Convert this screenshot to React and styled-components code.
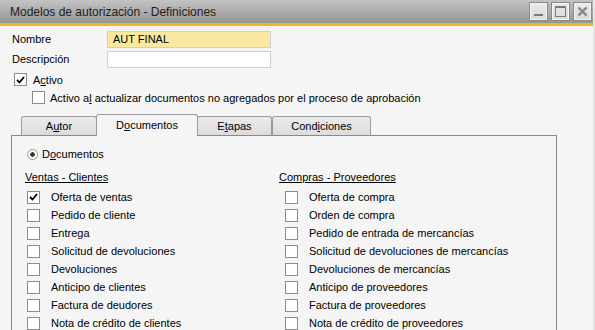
import styled, { createGlobalStyle } from 'styled-components';

const GlobalStyle = createGlobalStyle`
  html, body {
    margin: 0;
    padding: 0;
    background: #f5f5f5;
  }
  * {
    box-sizing: border-box;
  }
`;

const ventas = [
  { label: 'Oferta de ventas', checked: true },
  { label: 'Pedido de cliente' },
  { label: 'Entrega' },
  { label: 'Solicitud de devoluciones' },
  { label: 'Devoluciones' },
  { label: 'Anticipo de clientes' },
  { label: 'Factura de deudores' },
  { label: 'Nota de crédito de clientes' },
];

const compras = [
  { label: 'Oferta de compra' },
  { label: 'Orden de compra' },
  { label: 'Pedido de entrada de mercancías' },
  { label: 'Solicitud de devoluciones de mercancías' },
  { label: 'Devoluciones de mercancías' },
  { label: 'Anticipo de proveedores' },
  { label: 'Factura de proveedores' },
  { label: 'Nota de crédito de proveedores' },
];

const tabs = [
  { key: 'autor', pre: 'A', hot: 'u', post: 'tor', width: 76 },
  { key: 'docs', pre: 'D', hot: 'o', post: 'cumentos', width: 102, active: true },
  { key: 'etapas', pre: 'E', hot: 't', post: 'apas', width: 75 },
  { key: 'cond', pre: 'Cond', hot: 'i', post: 'ciones', width: 99 },
];

const CheckMark = () => (
  <svg width="9" height="8" viewBox="0 0 9 8">
    <polyline points="1,4 3.5,6.5 8,1" fill="none" stroke="#000" strokeWidth="1.8" />
  </svg>
);

const CheckBox = ({ checked }) => <Box>{checked && <CheckMark />}</Box>;

const App = () => {
  return (
    <Window>
      <GlobalStyle />
      <TitleBar>
        <Title>Modelos de autorización - Definiciones</Title>
        <WinButtons>
          <WinButton>
            <svg width="11" height="11" viewBox="0 0 11 11">
              <rect x="1" y="8" width="9" height="2" fill="#7a7a7a" />
            </svg>
          </WinButton>
          <WinButton>
            <svg width="13" height="13" viewBox="0 0 13 13">
              <rect x="1.5" y="1.5" width="10" height="10" fill="none" stroke="#7a7a7a" />
              <rect x="1" y="1" width="11" height="2" fill="#7a7a7a" />
            </svg>
          </WinButton>
          <WinButton>
            <svg width="11" height="11" viewBox="0 0 11 11">
              <path d="M1.5 1.5 L9.5 9.5 M9.5 1.5 L1.5 9.5" stroke="#858585" strokeWidth="2.4" />
            </svg>
          </WinButton>
        </WinButtons>
      </TitleBar>
      <Accent />
      <Body>
        <Fields>
          <FieldRow>
            <FieldLabel>Nombre</FieldLabel>
            <Input $required>AUT FINAL</Input>
          </FieldRow>
          <FieldRow>
            <FieldLabel>Descripción</FieldLabel>
            <Input />
          </FieldRow>
        </Fields>
        <OptionRow $indent={14} $gap={6}>
          <CheckBox checked />
          <span>
            A<Hot>c</Hot>tivo
          </span>
        </OptionRow>
        <OptionRow $indent={32} $gap={5}>
          <CheckBox />
          <span>
            Activo a<Hot>l</Hot> actualizar documentos no agregados por el proceso de aprobación
          </span>
        </OptionRow>
        <TabArea>
          <TabStrip>
            {tabs.map((t) => (
              <Tab key={t.key} $active={t.active} $width={t.width}>
                {t.pre}
                <Hot>{t.hot}</Hot>
                {t.post}
              </Tab>
            ))}
          </TabStrip>
          <Panel>
            <RadioRow>
              <Radio />
              <span>
                D<Hot>o</Hot>cumentos
              </span>
            </RadioRow>
            <Columns>
              <Column>
                <GroupTitle>Ventas - Clientes</GroupTitle>
                {ventas.map((item) => (
                  <Item key={item.label} $indent={2}>
                    <CheckBox checked={item.checked} />
                    <span>{item.label}</span>
                  </Item>
                ))}
              </Column>
              <Column>
                <GroupTitle>Compras - Proveedores</GroupTitle>
                {compras.map((item) => (
                  <Item key={item.label} $indent={6}>
                    <CheckBox checked={item.checked} />
                    <span>{item.label}</span>
                  </Item>
                ))}
              </Column>
            </Columns>
          </Panel>
        </TabArea>
      </Body>
    </Window>
  );
};

const Window = styled.div`
  width: 595px;
  height: 330px;
  overflow: hidden;
  display: flex;
  flex-direction: column;
  background: #f5f5f5;
  border-right: 2px solid #e4e4e4;
  font-family: 'Liberation Sans', Arial, sans-serif;
  font-size: 11px;
  color: #000;
`;

const TitleBar = styled.div`
  height: 23px;
  flex-shrink: 0;
  display: flex;
  align-items: center;
  justify-content: space-between;
  padding: 0 1px 0 10px;
  background: linear-gradient(#c3c3c3, #959595);
`;

const Title = styled.div`
  font-size: 12px;
  color: #1c1c1c;
`;

const WinButtons = styled.div`
  display: flex;
  gap: 3px;
  align-self: flex-start;
  margin-top: 2px;
`;

const WinButton = styled.div`
  width: 19px;
  height: 19px;
  display: flex;
  align-items: center;
  justify-content: center;
  border: 1px solid #8a8a8a;
  box-shadow: inset 0 0 0 1px #f4f4f4;
  background: linear-gradient(#eaeaea, #d9d9d9);
`;

const Accent = styled.div`
  height: 3px;
  flex-shrink: 0;
  background: #f6b716;
`;

const Body = styled.div`
  flex: 1;
  display: flex;
  flex-direction: column;
`;

const Fields = styled.div`
  display: flex;
  flex-direction: column;
  gap: 3px;
  margin-top: 5px;
`;

const FieldRow = styled.div`
  display: flex;
  align-items: center;
  height: 17px;
`;

const FieldLabel = styled.div`
  width: 107px;
  height: 17px;
  padding-left: 12px;
  line-height: 17px;
`;

const Input = styled.div`
  width: 164px;
  height: 17px;
  padding: 0 5px;
  line-height: 15px;
  border: 1px solid #cfcfcf;
  background: ${(p) => (p.$required ? '#fbe8a0' : '#ffffff')};
`;

const OptionRow = styled.div`
  display: flex;
  align-items: center;
  gap: ${(p) => p.$gap}px;
  height: 13px;
  margin-top: 5px;
  padding-left: ${(p) => p.$indent}px;
`;

const Hot = styled.span`
  text-decoration: underline;
`;

const Box = styled.span`
  width: 13px;
  height: 13px;
  flex-shrink: 0;
  display: flex;
  align-items: center;
  justify-content: center;
  border: 1px solid #8c8c8c;
  background: #fff;
`;

const TabArea = styled.div`
  flex: 1;
  display: flex;
  flex-direction: column;
  margin: 10px 0 0 11px;
  width: 546px;
`;

const TabStrip = styled.div`
  display: flex;
  align-items: flex-end;
  height: 22px;
  padding-left: 10px;
  position: relative;
  z-index: 1;
  margin-bottom: -1px;
`;

const Tab = styled.div`
  width: ${(p) => p.$width}px;
  height: ${(p) => (p.$active ? 22 : 20)}px;
  display: flex;
  align-items: center;
  justify-content: center;
  border: 1px solid #9c9c9c;
  border-bottom: ${(p) => (p.$active ? 'none' : '1px solid #8a8a8a')};
  border-radius: 3px 3px 0 0;
  margin-right: ${(p) => (p.$active ? -1 : 0)}px;
  margin-left: ${(p) => (p.$active ? -1 : 0)}px;
  background: ${(p) => (p.$active ? '#f5f5f5' : 'linear-gradient(#ececec, #dcdcdc)')};
  padding-bottom: ${(p) => (p.$active ? 2 : 0)}px;
`;

const Panel = styled.div`
  flex: 1;
  border: 1px solid #8a8a8a;
  border-bottom: none;
  padding: 9px 0 0 13px;
`;

const RadioRow = styled.div`
  display: flex;
  align-items: center;
  gap: 4px;
  height: 18px;
  padding-left: 2px;
`;

const Radio = styled.span`
  width: 11px;
  height: 11px;
  border-radius: 50%;
  border: 1px solid #9a9a9a;
  background: radial-gradient(circle, #333 0 2px, #fff 2.5px);
`;

const Columns = styled.div`
  display: grid;
  grid-template-columns: 254px 1fr;
  margin-top: 5px;
`;

const Column = styled.div`
  display: flex;
  flex-direction: column;
`;

const GroupTitle = styled.div`
  height: 18px;
  line-height: 18px;
  text-decoration: underline;
  margin-bottom: 2px;
`;

const Item = styled.div`
  display: flex;
  align-items: center;
  gap: 11px;
  height: 18px;
  padding-left: ${(p) => p.$indent}px;
`;

export default App;
